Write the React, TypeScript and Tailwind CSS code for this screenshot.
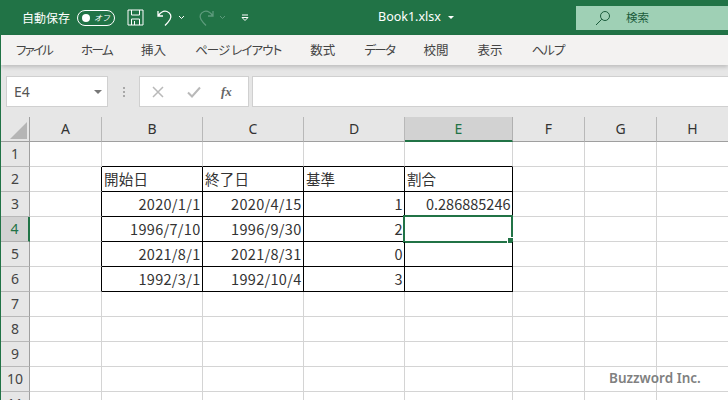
const tabs = [
  { label: "ファイル", spacing: "tracking-[-1.8px]" },
  { label: "ホーム", spacing: "tracking-[-1.6px]" },
  { label: "挿入", spacing: "" },
  { label: "ページ レイアウト", spacing: "tracking-[-0.9px]" },
  { label: "数式", spacing: "" },
  { label: "データ", spacing: "tracking-[-1.6px]" },
  { label: "校閲", spacing: "" },
  { label: "表示", spacing: "" },
  { label: "ヘルプ", spacing: "tracking-[-1px]" },
];
const columns = ["A", "B", "C", "D", "E", "F", "G", "H"];
const rows = [1, 2, 3, 4, 5, 6, 7, 8, 9, 10, 11];

const cells: Record<string, string> = {
  B2: "開始日", C2: "終了日", D2: "基準", E2: "割合",
  B3: "2020/1/1", C3: "2020/4/15", D3: "1", E3: "0.286885246",
  B4: "1996/7/10", C4: "1996/9/30", D4: "2",
  B5: "2021/8/1", C5: "2021/8/31", D5: "0",
  B6: "1992/3/1", C6: "1992/10/4", D6: "3",
};

const cellClass = (r: number, c: number) => {
  const right = r >= 2 && r <= 6 && c <= 4 ? "border-r-black" : "border-r-[#d4d4d4]";
  const bottom = r <= 6 && c >= 1 && c <= 4 ? "border-b-black" : "border-b-[#d4d4d4]";
  const align = r === 2 ? "justify-start pl-[2px]" : "justify-end pr-[1.5px]";
  const spacing = c === 1 || c === 2 ? "tracking-[0.3px]" : "";
  return `relative flex items-center border-r border-b ${right} ${bottom} ${align} ${spacing}`;
};

const App = () => {
  return (
    <div className="w-[728px] h-[400px] overflow-hidden relative bg-white border-l border-l-[#217346] font-['Noto_Sans_CJK_JP',sans-serif]">
      {/* title bar */}
      <div className="h-[35px] -ml-px bg-[#217346] flex items-center text-white">
        <span className="ml-[22px] text-[12px] leading-none">自動保存</span>
        <div className="ml-[7px] w-[38px] h-[16px] rounded-full border border-white flex items-center justify-between pl-[4px] pr-[4px]">
          <span className="w-[8px] h-[8px] rounded-full bg-white" />
          <span className="text-[8px] leading-none italic">オフ</span>
        </div>
        <svg className="ml-[12px]" width="17" height="17" viewBox="0 0 17 17" fill="none" stroke="#fff" strokeWidth="1">
          <path d="M1 1h15v15H1zM4.5 1v5h8V1M4.5 16v-6h8v6M7.5 12v4" />
        </svg>
        <svg className="ml-[12px]" width="18" height="18" viewBox="0 0 18 18" fill="none" stroke="#fff" strokeWidth="1.3">
          <path d="M2 2v5h5M2.5 6.5C5 3 8 1.5 11 2.5c3.5 1.2 5 5 3 8-1.2 2-3 4-5 6" />
        </svg>
        <svg className="ml-[4px]" width="7" height="5" viewBox="0 0 7 5" fill="none" stroke="#fff" strokeWidth="1">
          <path d="M1 1l2.5 2.5L6 1" />
        </svg>
        <svg className="ml-[12px]" width="18" height="18" viewBox="0 0 18 18" fill="none" stroke="#5d9b7c" strokeWidth="1.3">
          <path d="M16 2v5h-5M15.5 6.5C13 3 10 1.5 7 2.5c-3.5 1.2-5 5-3 8 1.2 2 3 4 5 6" />
        </svg>
        <svg className="ml-[4px]" width="7" height="5" viewBox="0 0 7 5" fill="none" stroke="#5d9b7c" strokeWidth="1">
          <path d="M1 1l2.5 2.5L6 1" />
        </svg>
        <svg className="ml-[15px]" width="8" height="8" viewBox="0 0 8 8" fill="none" stroke="#fff" strokeWidth="1">
          <path d="M1 1h6M1 3.5h6L4 6.5z" />
        </svg>
        <span className="ml-[129px] text-[12.5px] leading-none font-['Noto_Sans',sans-serif]">Book1.xlsx</span>
        <span className="ml-[7px] w-0 h-0 border-x-[3px] border-x-transparent border-t-[3px] border-t-white" />
        <div className="ml-auto w-[152px] h-[24px] bg-[#9fd0b5] flex items-center text-[#1c5c3c]">
          <svg className="ml-[19px]" width="16" height="16" viewBox="0 0 16 16" fill="none" stroke="#1c5c3c" strokeWidth="1">
            <circle cx="10" cy="6" r="4.5" />
            <path d="M6.8 9.2L1 15" />
          </svg>
          <span className="ml-[15px] text-[11.5px] leading-none">検索</span>
        </div>
      </div>

      {/* tabs */}
      <div className="h-[30px] bg-[#f3f2f1] flex items-center gap-[29px] pl-[15px] text-[12.5px] text-[#444] [font-feature-settings:'palt'] shadow-[0_2px_4px_rgba(0,0,0,0.18)] relative">
        {tabs.map((tab) => (
          <span key={tab.label} className={`leading-none whitespace-nowrap ${tab.spacing}`}>{tab.label}</span>
        ))}
      </div>

      {/* formula bar */}
      <div className="h-[52px] bg-[#e6e6e6] flex items-start pt-[11px] pl-[5px]">
        <div className="w-[102px] h-[31px] bg-white border border-[#d0d0d0] flex items-center justify-between pl-[7px] pr-[5px]">
          <span className="text-[14px] text-[#555] leading-none font-['Noto_Sans',sans-serif]">E4</span>
          <span className="w-0 h-0 border-x-[4px] border-x-transparent border-t-[4px] border-t-[#777]" />
        </div>
        <div className="w-[31px] h-[31px] flex flex-col items-center justify-center gap-[2px]">
          <span className="w-[2px] h-[2px] bg-[#a8a8a8]" />
          <span className="w-[2px] h-[2px] bg-[#a8a8a8]" />
          <span className="w-[2px] h-[2px] bg-[#a8a8a8]" />
        </div>
        <div className="w-[110px] h-[31px] bg-white border border-[#d0d0d0] flex items-center">
          <svg className="ml-[12px]" width="12" height="12" viewBox="0 0 12 12" fill="none" stroke="#b9b9b9" strokeWidth="1.5">
            <path d="M1 1l10 10M11 1L1 11" />
          </svg>
          <svg className="ml-[23px]" width="14" height="12" viewBox="0 0 14 12" fill="none" stroke="#b9b9b9" strokeWidth="2">
            <path d="M1 6.5L5 10.5L13 1.5" />
          </svg>
          <span className="ml-[20px] text-[13px] leading-none italic font-bold text-[#666] font-['Liberation_Serif',serif]">fx</span>
        </div>
        <div className="ml-[3px] flex-1 h-[31px] bg-white border border-[#d0d0d0] border-r-0" />
      </div>

      {/* sheet */}
      <div className="grid grid-cols-[29px_72px_101px_101px_101px_108px_72px_72px_72px] auto-rows-[25px] text-[14.5px] text-[#333] leading-none">
        <div className="bg-[#e6e6e6] border-r border-b border-[#9f9f9f] flex items-end justify-end">
          <svg width="17" height="17" viewBox="0 0 17 17" className="mb-[2px] mr-[2px]">
            <path d="M17 0v17H0z" fill="#b5b5b5" />
          </svg>
        </div>
        {columns.map((col) => (
          <div
            key={col}
            className={
              col === "E"
                ? "bg-[#d2d2d2] border-r border-r-[#b0b0b0] border-b-2 border-b-[#217346] flex items-center justify-center text-[#217346] font-['Noto_Sans',sans-serif] text-[14px]"
                : "bg-[#e6e6e6] border-r border-r-[#b8b8b8] border-b border-b-[#9f9f9f] flex items-center justify-center font-['Noto_Sans',sans-serif] text-[14px]"
            }
          >
            {col}
          </div>
        ))}
        {rows.map((r) => (
          <div key={r} className="contents">
            <div
              className={
                r === 4
                  ? "bg-[#d2d2d2] border-r-2 border-r-[#217346] border-b border-b-[#b0b0b0] flex items-center justify-center text-[#217346] font-['Noto_Sans',sans-serif] text-[14px]"
                  : "bg-[#e6e6e6] border-r border-r-[#9f9f9f] border-b border-b-[#b8b8b8] flex items-center justify-center text-[#444] font-['Noto_Sans',sans-serif] text-[14px]"
              }
            >
              {r}
            </div>
            {columns.map((col, c) => (
              <div key={col} className={cellClass(r, c)}>
                {cells[`${col}${r}`]}
                {col === "E" && r === 4 && (
                  <div className="absolute -left-[2px] -top-[2px] -right-[1px] -bottom-[2px] border-2 border-[#217346]">
                    <span className="absolute -right-[3px] -bottom-[3px] w-[5px] h-[5px] bg-[#217346] border border-white box-content" />
                  </div>
                )}
              </div>
            ))}
          </div>
        ))}
      </div>

      <span className="absolute left-[608px] top-[372px] text-[13.5px] leading-none font-semibold text-[#808080] font-['Noto_Sans',sans-serif]">Buzzword Inc.</span>
    </div>
  );
};

export default App;
